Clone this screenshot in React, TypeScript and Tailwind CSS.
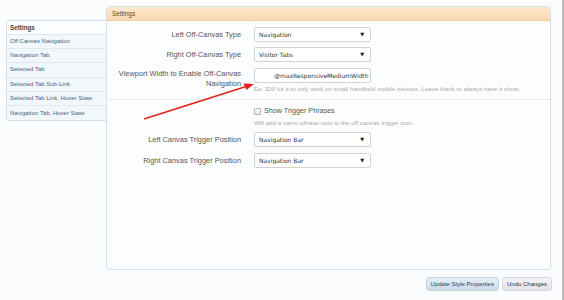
import React from "react";

const labelCls =
  "w-[134px] shrink-0 text-right text-[7.4px] leading-[10px] text-[#555]";

function Select({ value }: { value: string }) {
  return (
    <div className="flex h-[15px] w-[117px] items-center justify-between rounded-[2px] border border-[#d2d2d2] bg-white pl-[4px] pr-[6px] text-[6px] text-[#333] [font-family:'DejaVu_Sans',sans-serif]">
      <span>{value}</span>
      <span className="text-[5px] leading-none text-[#111]">▼</span>
    </div>
  );
}

export default function App() {
  const sideItems = [
    "Off Canvas Navigation",
    "Navigation Tab",
    "Selected Tab",
    "Selected Tab Sub-Link",
    "Selected Tab Link, Hover State",
    "Navigation Tab, Hover State",
  ];
  return (
    <div className="relative flex h-[300px] w-[564px] overflow-hidden bg-[#fbfcfd] [font-family:'Liberation_Sans',Arial,sans-serif]">
      <div className="flex w-[561px] flex-col">
        <div className="flex">
          {/* sidebar */}
          <div className="w-[106px] shrink-0 pl-[6px] pt-[20px]">
            <div className="rounded-l-[3px] border border-r-0 border-[#d3e2ea] bg-[#f1f7fb]">
              <div className="flex h-[14px] items-center border-b border-[#dde8ef] bg-[#fdfeff] pl-[3px] text-[6.3px] font-bold text-[#444]">
                Settings
              </div>
              {sideItems.map((s, i) => (
                <div
                  key={s}
                  className={`flex h-[14.2px] items-center pl-[3px] text-[6px] text-[#4a6580] ${
                    i < sideItems.length - 1 ? "border-b border-[#dde8ef]" : ""
                  }`}
                >
                  {s}
                </div>
              ))}
            </div>
          </div>
          {/* panel */}
          <div className="mt-[6px] flex h-[264px] w-[445px] flex-col rounded-[3px] border border-[#d3e2ea] bg-[#fcfdfe]">
            <div className="flex h-[14px] items-center rounded-t-[3px] border-b border-[#f1cfa4] bg-gradient-to-b from-[#fee9cf] to-[#fbd8b0] pl-[5px] text-[6.4px] text-[#5a4a3a]">
              Settings
            </div>
            <div className="flex flex-col pt-[6px]">
              <div className="flex h-[15px] items-center gap-[13px]">
                <div className={labelCls}>Left Off-Canvas Type</div>
                <Select value="Navigation" />
              </div>
              <div className="mt-[5px] flex h-[15px] items-center gap-[13px]">
                <div className={labelCls}>Right Off-Canvas Type</div>
                <Select value="Visitor Tabs" />
              </div>
              <div className="mt-[6px] flex gap-[13px]">
                <div className={`${labelCls} pt-[1px]`}>
                  Viewport Width to Enable Off-Canvas
                  <br />
                  Navigation
                </div>
                <div className="flex flex-col">
                  <div className="flex h-[15px] w-[117px] items-center overflow-hidden whitespace-nowrap rounded-[2px] border border-[#d2d2d2] bg-white pl-[19px] text-[6px] text-[#333] [font-family:'DejaVu_Sans',sans-serif]">
                    @maxResponsiveMediumWidth
                  </div>
                  <div className="mt-[2px] whitespace-nowrap text-[6.2px] leading-[8px] text-[#aaa]">
                    Ex: 320 for it to only work on small handheld mobile devices. Leave blank to always have it show.
                  </div>
                </div>
              </div>
              <div className="mt-[6px] h-px w-full bg-[#e6ecf0]" />
              <div className="mt-[6px] flex gap-[13px]">
                <div className="w-[134px] shrink-0" />
                <div className="flex flex-col">
                  <div className="flex items-center gap-[3px]">
                    <div className="h-[7px] w-[7px] rounded-[1px] border border-[#b5b5b5] bg-gradient-to-b from-[#fff] to-[#e6e6e6]" />
                    <span className="text-[7.2px] leading-[10px] text-[#555]">
                      Show Trigger Phrases
                    </span>
                  </div>
                  <div className="mt-[3px] whitespace-nowrap text-[6.2px] leading-[8px] text-[#aaa]">
                    Will add a menu phrase next to the off canvas trigger icon.
                  </div>
                </div>
              </div>
              <div className="mt-[5px] flex h-[15px] items-center gap-[13px]">
                <div className={labelCls}>Left Canvas Trigger Position</div>
                <Select value="Navigation Bar" />
              </div>
              <div className="mt-[6px] flex h-[15px] items-center gap-[13px]">
                <div className={labelCls}>Right Canvas Trigger Position</div>
                <Select value="Navigation Bar" />
              </div>
            </div>
          </div>
        </div>
        <div className="mt-[7px] flex justify-end gap-[3px] pr-[9px]">
          <div className="flex h-[14px] items-center rounded-[3px] border border-[#c5d6e3] bg-gradient-to-b from-[#e4eff7] to-[#c9dcea] px-[4px] text-[6px] text-[#2c3e50]">
            Update Style Properties
          </div>
          <div className="flex h-[14px] items-center rounded-[3px] border border-[#d8d6e0] bg-gradient-to-b from-[#f4f3f7] to-[#e3e1ea] px-[4px] text-[6px] text-[#333]">
            Undo Changes
          </div>
        </div>
      </div>
      <div className="w-px bg-white" />
      <div className="w-[2px] bg-[#bdbdbd]" />
      <svg
        className="pointer-events-none absolute left-0 top-0"
        width="564"
        height="300"
        viewBox="0 0 564 300"
      >
        <line x1="144" y1="119" x2="246" y2="86.5" stroke="#e2231a" strokeWidth="1.6" />
        <polygon points="254,84 243.5,83.5 246.5,90" fill="#e2231a" />
      </svg>
    </div>
  );
}
